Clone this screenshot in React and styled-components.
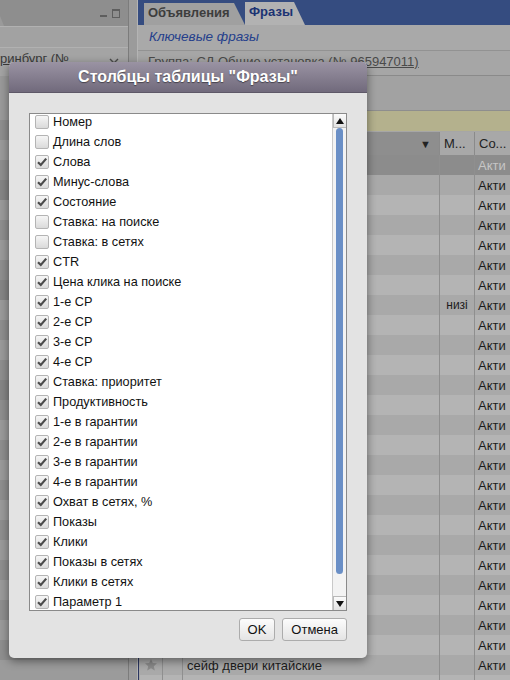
import React, { useState } from 'react'
import styled, { createGlobalStyle } from 'styled-components'

const GlobalStyle = createGlobalStyle`
	html, body {
		margin: 0;
		padding: 0;
		background: #8c8c8c;
	}
	body {
		font-family: "Liberation Sans", Arial, sans-serif;
	}
`

const columns = [
	['Номер', false],
	['Длина слов', false],
	['Слова', true],
	['Минус-слова', true],
	['Состояние', true],
	['Ставка: на поиске', false],
	['Ставка: в сетях', false],
	['CTR', true],
	['Цена клика на поиске', true],
	['1-е СР', true],
	['2-е СР', true],
	['3-е СР', true],
	['4-е СР', true],
	['Ставка: приоритет', true],
	['Продуктивность', true],
	['1-е в гарантии', true],
	['2-е в гарантии', true],
	['3-е в гарантии', true],
	['4-е в гарантии', true],
	['Охват в сетях, %', true],
	['Показы', true],
	['Клики', true],
	['Показы в сетях', true],
	['Клики в сетях', true],
	['Параметр 1', true],
]

// shades of the rows of the left tree, mostly hidden by the dialog
const leftShades = [
	0, 1, 0, 1, 2, 0, 1, 0, 1, 2, 0, 1, 0, 1, 2, 1, 0, 1, 0, 1, 0, 1, 0, 1, 0, 1, 0, 1, 0,
]

const App = () => {
	const [checks, setChecks] = useState(columns.map((c) => c[1]))

	const toggle = (i) => {
		setChecks(checks.map((v, j) => (j === i ? !v : v)))
	}

	const rows = []
	for (let i = 0; i < 27; i++) {
		rows.push(
			<Row key={i} $alt={i % 2 === 1} $selected={i === 0}>
				<Cell>{i === 25 && <Star />}</Cell>
				<Cell />
				<Cell $phrase>{i === 25 ? 'сейф двери китайские' : ''}</Cell>
				<Cell $small>{i === 7 ? 'низі' : ''}</Cell>
				<Cell>Акти</Cell>
			</Row>
		)
	}

	return (
		<>
			<GlobalStyle />
			<Page>
				<LeftPanel>
					<LeftHead>
						<TabCorner />
						<WinButtons>
							<MinIcon />
							<MaxIcon />
						</WinButtons>
					</LeftHead>
					<LeftBar />
					<LeftFilter>
						<span>ринбург (№</span>
						<svg width='10' height='8' viewBox='0 0 10 8'>
							<path d='M1 2 L5 6 L9 2' fill='none' stroke='#4a4a4a' strokeWidth='1.4' />
						</svg>
					</LeftFilter>
					<LeftRows>
						{leftShades.map((s, i) => (
							<LeftRow key={i} $shade={s} />
						))}
					</LeftRows>
				</LeftPanel>
				<Splitter />
				<RightPanel>
					<TabBar>
						<Tab>Объявления</Tab>
						<Tab $active>Фразы</Tab>
					</TabBar>
					<SubTabs>Ключевые фразы</SubTabs>
					<GroupLine>
						Группа: СД Общие установка <u>(№ 965947011)</u>
					</GroupLine>
					<Toolbar />
					<Notice />
					<Table>
						<HeadRow>
							<HeadCell />
							<HeadCell />
							<HeadCell $sort>▼</HeadCell>
							<HeadCell $light>М...</HeadCell>
							<HeadCell $light>Со...</HeadCell>
						</HeadRow>
						{rows}
					</Table>
				</RightPanel>

				<Dialog>
					<DialogTitle>Столбцы таблицы "Фразы"</DialogTitle>
					<DialogBody>
						<ListBox>
							<ListItems>
								{columns.map((c, i) => (
									<Item key={c[0]} onClick={() => toggle(i)}>
										<Check>
											{checks[i] && (
												<svg width='12' height='12' viewBox='0 0 12 12'>
													<path
														d='M2 6.2 L4.8 9 L10.2 2.6'
														fill='none'
														stroke='#4b4b4b'
														strokeWidth='2.2'
													/>
												</svg>
											)}
										</Check>
										<Label>{c[0]}</Label>
									</Item>
								))}
							</ListItems>
							<ScrollBar>
								<ScrollArrow>
									<svg width='8' height='6' viewBox='0 0 8 6'>
										<path d='M0 6 L4 0 L8 6 Z' fill='#111' />
									</svg>
								</ScrollArrow>
								<ScrollTrack>
									<ScrollThumb />
								</ScrollTrack>
								<ScrollArrow>
									<svg width='8' height='6' viewBox='0 0 8 6'>
										<path d='M0 0 L8 0 L4 6 Z' fill='#111' />
									</svg>
								</ScrollArrow>
							</ScrollBar>
						</ListBox>
						<Buttons>
							<Button>OK</Button>
							<Button>Отмена</Button>
						</Buttons>
					</DialogBody>
				</Dialog>
			</Page>
		</>
	)
}

const Star = () => (
	<svg width='14' height='14' viewBox='0 0 14 14'>
		<path
			d='M7 1 L8.8 5 L13 5.3 L9.8 8.2 L10.8 12.6 L7 10.3 L3.2 12.6 L4.2 8.2 L1 5.3 L5.2 5 Z'
			fill='#8a8a8a'
		/>
	</svg>
)

const Page = styled.div`
	position: relative;
	width: 510px;
	height: 680px;
	overflow: hidden;
	display: flex;
	background: #8c8c8c;
	font-size: 13px;
`

const LeftPanel = styled.div`
	width: 128px;
	display: flex;
	flex-direction: column;
	background: #969696;
	& > * {
		flex-shrink: 0;
	}
`

const LeftHead = styled.div`
	height: 26px;
	display: flex;
	justify-content: space-between;
	align-items: center;
	background: #8e8e8e;
`

const TabCorner = styled.div`
	width: 4px;
	height: 10px;
	align-self: flex-end;
	background: #9a9a9a;
	clip-path: polygon(0 0, 100% 100%, 0 100%);
`

const WinButtons = styled.div`
	display: flex;
	align-items: center;
	gap: 5px;
	padding-right: 8px;
`

const MinIcon = styled.span`
	width: 7px;
	height: 2px;
	margin-top: 6px;
	background: #5e5e5e;
`

const MaxIcon = styled.span`
	width: 6px;
	height: 6px;
	border: 1px solid #5e5e5e;
	border-top-width: 2px;
`

const LeftBar = styled.div`
	height: 20px;
	background: #a2a2a2;
	border-top: 1px solid #b1b1b1;
	border-bottom: 1px solid #b1b1b1;
`

const LeftFilter = styled.div`
	height: 28px;
	display: flex;
	justify-content: space-between;
	align-items: flex-start;
	padding: 3px 9px 0 0;
	box-sizing: border-box;
	background: #a4a4a4;
	color: #3a3a3a;
	span {
		text-decoration: underline;
		white-space: nowrap;
		line-height: 16px;
	}
	svg {
		margin-top: 6px;
	}
`

const LeftRows = styled.div`
	flex: 1 1 auto !important;
	padding-top: 24px;
	background: #9a9a9a;
	overflow: hidden;
`

const LeftRow = styled.div`
	height: 20px;
	background: ${(p) => ['#9b9b9b', '#8f8f8f', '#858585'][p.$shade]};
`

const Splitter = styled.div`
	width: 8px;
	background: #9b9b9b;
	border-left: 1px solid #7c7c7c;
`

const RightPanel = styled.div`
	flex: 1;
	display: flex;
	flex-direction: column;
	background: #a6a6a6;
	border-left: 1px solid #b4b4b4;
	& > * {
		flex-shrink: 0;
	}
`

const TabBar = styled.div`
	height: 25px;
	display: flex;
	align-items: flex-end;
	padding-left: 6px;
	background: #354c80;
`

const Tab = styled.div`
	height: ${(p) => (p.$active ? '23px' : '22px')};
	width: ${(p) => (p.$active ? '60px' : '101px')};
	padding-left: 4px;
	box-sizing: border-box;
	line-height: 20px;
	font-weight: bold;
	font-size: 13px;
	color: ${(p) => (p.$active ? '#1b3273' : '#3d3d3d')};
	background: ${(p) => (p.$active ? '#b2b2b2' : '#a0a0a0')};
	clip-path: polygon(0 0, calc(100% - 11px) 0, 100% 100%, 0 100%);
`

const SubTabs = styled.div`
	height: 25px;
	line-height: 23px;
	padding-left: 11px;
	font-style: italic;
	font-size: 13.5px;
	color: #25408c;
	background: #a9a9a9;
`

const GroupLine = styled.div`
	height: 24px;
	line-height: 21px;
	padding-left: 10px;
	white-space: nowrap;
	color: #4a4a4a;
	border-top: 1px solid #929292;
	background: #a6a6a6;
`

const Toolbar = styled.div`
	height: 34px;
	border-top: 1px solid #8a8a8a;
	background: #a2a2a2;
`

const Notice = styled.div`
	height: 20px;
	border-top: 1px solid #8e8e8e;
	background: #b4b18d;
`

const Table = styled.div`
	flex: 1 1 auto !important;
	min-height: 0;
	overflow: hidden;
	margin-top: 1px;
	padding-left: 1px;
	border-left: 1px solid #2a3560;
	display: flex;
	flex-direction: column;
`

const gridCols = '22px 20px 257px 35px 1fr'

const HeadRow = styled.div`
	height: 23px;
	flex-shrink: 0;
	display: grid;
	grid-template-columns: ${gridCols};
	background: #8e8e8e;
`

const HeadCell = styled.div`
	display: flex;
	align-items: center;
	justify-content: ${(p) => (p.$sort ? 'flex-end' : 'flex-start')};
	padding: ${(p) => (p.$sort ? '0 8px 0 0' : '0 0 0 4px')};
	font-size: ${(p) => (p.$sort ? '11px' : '13px')};
	color: #222;
	white-space: nowrap;
	overflow: hidden;
	background: ${(p) => (p.$light ? '#a8a8a8' : 'transparent')};
	border-left: ${(p) => (p.$light ? '1px solid #8a8a8a' : 'none')};
`

const Row = styled.div`
	height: 20px;
	flex-shrink: 0;
	display: grid;
	grid-template-columns: ${gridCols};
	color: ${(p) => (p.$selected ? '#c6c6c6' : '#1c1c1c')};
	background: ${(p) =>
		p.$selected ? '#8c8c8c' : p.$alt ? '#a9a9a9' : '#b4b4b4'};
`

const Cell = styled.div`
	display: flex;
	align-items: center;
	justify-content: ${(p) => (p.$phrase ? 'flex-start' : 'center')};
	padding-left: ${(p) => (p.$phrase ? '4px' : '0')};
	border-left: 1px solid #8f8f8f;
	white-space: nowrap;
	overflow: hidden;
	font-size: ${(p) => (p.$small ? '12px' : '13px')};
	&:last-child {
		justify-content: flex-start;
		padding-left: 3px;
	}
	&:first-child {
		border-left: none;
	}
`

const Dialog = styled.div`
	position: absolute;
	left: 9px;
	top: 62px;
	width: 358px;
	background: #e3e3e3;
	border-radius: 5px;
	box-shadow: 0 3px 10px rgba(0, 0, 0, 0.45);
	overflow: hidden;
`

const DialogTitle = styled.div`
	height: 30px;
	line-height: 29px;
	text-align: center;
	font-weight: bold;
	font-size: 16px;
	color: #fff;
	text-shadow: 0 1px 1px rgba(0, 0, 0, 0.45);
	background: linear-gradient(#9a93a3, #716a7c);
	border-bottom: 1px solid #5e5868;
`

const DialogBody = styled.div`
	padding: 20px 20px 17px 20px;
`

const ListBox = styled.div`
	height: 496px;
	display: flex;
	border: 1px solid #8a8a8a;
	background: #fff;
`

const ListItems = styled.div`
	flex: 1;
	overflow: hidden;
	padding-left: 5px;
`

const Item = styled.div`
	height: 20px;
	display: flex;
	align-items: flex-start;
	padding-top: 1px;
	box-sizing: border-box;
	cursor: default;
`

const Check = styled.div`
	width: 12px;
	height: 12px;
	border: 1px solid #b4b4b4;
	border-radius: 2px;
	background: linear-gradient(#f6f6f6, #dadada);
	display: flex;
	align-items: center;
	justify-content: center;
	flex-shrink: 0;
`

const Label = styled.span`
	margin-left: 4px;
	font-size: 12.7px;
	line-height: 14px;
	color: #111;
	white-space: nowrap;
`

const ScrollBar = styled.div`
	width: 13px;
	display: flex;
	flex-direction: column;
	border-left: 1px solid #c9c9c9;
	background: #f3f3f3;
`

const ScrollArrow = styled.div`
	height: 13px;
	display: flex;
	align-items: center;
	justify-content: center;
	border: 1px solid #b9b9b9;
	border-right: none;
	background: linear-gradient(#fbfbfb, #e2e2e2);
	&:first-child {
		border-top: none;
	}
	&:last-child {
		border-bottom: none;
	}
`

const ScrollTrack = styled.div`
	flex: 1;
	padding: 0 0 0 3px;
`

const ScrollThumb = styled.div`
	width: 7px;
	height: 446px;
	border-radius: 4px;
	background: #6a8fc6;
`

const Buttons = styled.div`
	display: flex;
	justify-content: flex-end;
	gap: 7px;
	margin-top: 7px;
`

const Button = styled.div`
	height: 21px;
	line-height: 21px;
	padding: 0 8px;
	text-align: center;
	font-size: 13px;
	color: #111;
	border: 1px solid #acacac;
	border-radius: 3px;
	background: linear-gradient(#fcfcfc, #e4e4e4);
`

export default App
